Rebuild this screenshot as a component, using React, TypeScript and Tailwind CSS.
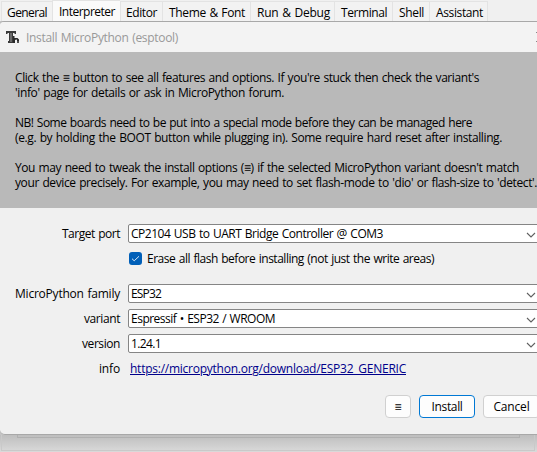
import { useLayoutEffect, useRef, useState } from "react";

/* Text whose tracking is tuned so the run is exactly `width` pixels wide. */
function Fit({ text, width, className = "" }: { text: string; width: number; className?: string }) {
  const ref = useRef<HTMLSpanElement>(null);
  const [spacing, setSpacing] = useState(0);
  useLayoutEffect(() => {
    const el = ref.current;
    if (!el) return;
    const natural = el.getBoundingClientRect().width - spacing * text.length;
    setSpacing((width - natural) / text.length);
  }, [text, width]);
  return (
    <span
      ref={ref}
      className={`inline-block [word-spacing:0.8px] whitespace-pre ${className}`}
      style={{ letterSpacing: spacing }}
    >
      {text}
    </span>
  );
}

const tabs = [
  { label: "General", text: 40, box: "w-[51px] pl-[5px]" },
  { label: "Interpreter", text: 56, box: "w-[68px] pl-[6px]", active: true },
  { label: "Editor", text: 31, box: "w-[42px] pl-[5px]" },
  { label: "Theme & Font", text: 76, box: "w-[88px] pl-[6px]" },
  { label: "Run & Debug", text: 73, box: "w-[84px] pl-[6px]" },
  { label: "Terminal", text: 46, box: "w-[58px] pl-[6px]" },
  { label: "Shell", text: 25, box: "w-[37px] pl-[6px]" },
  { label: "Assistant", text: 47, box: "w-[59px] pl-[6px]" },
];

const notes: [string, number][][] = [
  [
    ["Click the ≡ button to see all features and options. If you're stuck then check the variant's", 464],
    ["'info' page for details or ask in MicroPython forum.", 269],
  ],
  [
    ["NB! Some boards need to be put into a special mode before they can be managed here", 457],
    ["(e.g. by holding the BOOT button while plugging in). Some require hard reset after installing.", 487],
  ],
  [
    ["You may need to tweak the install options (≡) if the selected MicroPython variant doesn't match", 504],
    ["your device precisely. For example, you may need to set flash-mode to 'dio' or flash-size to 'detect'.", 522],
  ],
];

function Row({ label, width, children }: { label: string; width: number; children: React.ReactNode }) {
  return (
    <div className="flex h-[19px] items-center">
      <div className="flex w-[120px] shrink-0 justify-end">
        <Fit text={label} width={width} />
      </div>
      <div className="ml-2 min-w-0 flex-1">{children}</div>
    </div>
  );
}

function Combo({ text, width }: { text: string; width: number }) {
  return (
    <div className="flex h-[19px] w-[412px] items-center justify-between rounded-[2px] border border-[#858585] bg-white pr-[3px] pl-[2px]">
      <Fit text={text} width={width} />
      <svg className="mt-[2px] h-[6px] w-[10px] shrink-0" viewBox="0 0 10 6" fill="none" stroke="#606060" strokeWidth="1.1">
        <path d="M1 1l4 4 4-4" />
      </svg>
    </div>
  );
}

export default function App() {
  return (
    <div className="flex h-[452px] w-[537px] flex-col overflow-hidden bg-[#f0f0f0] font-['Open_Sans','Noto_Sans',sans-serif] text-[12px] leading-[15px] text-black">
      <div className="flex h-[21px] shrink-0 items-end pl-px">
        {tabs.map((t) => (
          <div
            key={t.label}
            className={`${t.box} shrink-0 border-t border-l border-[#e3e3e3] pt-[3px] ${
              t.active ? "h-[21px] bg-[#fafafa]" : "h-5 bg-[#f2f2f2]"
            } ${t.label === "Assistant" ? "border-r" : ""}`}
          >
            <Fit text={t.label} width={t.text} />
          </div>
        ))}
      </div>

      <div className="bg-[#c4c4c4]">
        <div className="flex h-[414px] shrink-0 flex-col rounded-tl-[4px] rounded-bl-[5px] border-t border-b border-[#a8a8a8] bg-[#f0f0f0]">
          <div className="flex h-[30px] shrink-0 items-center rounded-tl-[4px] bg-[#f3f3f3] pl-[6px] text-[#999]">
            <svg className="h-[14px] w-[14px] shrink-0" viewBox="0 0 14 14" fill="none">
              <path d="M0 1h10v3H8.5V3H7v8h1v2H2v-2h1V3H1.5v1H0z" fill="#3a3a3a" />
              <path d="M5 3v9" stroke="#b5b5b5" strokeWidth="0.8" />
              <path d="M7 6h1.5v2h3L13 9.5V13h-2v-3H9v3H7z" fill="#2a2a2a" />
              <path d="M9.5 9.5h1.5M12 11v2" stroke="#999" strokeWidth="0.7" />
            </svg>
            <Fit text="Install MicroPython (esptool)" width={152} className="ml-[6px]" />
            <svg className="ml-auto h-[10px] w-[1px]" viewBox="0 0 1 10" fill="none" stroke="#888">
              <path d="M0 .5h1M0 9.5h1" />
            </svg>
          </div>

          <div className="flex h-[156px] shrink-0 flex-col gap-[15px] bg-[#b9b9b9] pt-[18px] pl-[15px]">
            {notes.map((group, i) => (
              <div key={i}>
                {group.map(([line, width]) => (
                  <div key={line} className="h-[15px]">
                    <Fit text={line} width={width} />
                  </div>
                ))}
              </div>
            ))}
          </div>

          <div className="flex flex-col pt-4">
            <Row label="Target port" width={58}>
              <Combo text="CP2104 USB to UART Bridge Controller @ COM3" width={252} />
            </Row>
            <div className="mt-[5px] flex h-5 items-center pl-[129px]">
              <div className="flex size-[13px] items-center justify-center rounded-[3px] bg-[#005fb8]">
                <svg className="size-[9px]" viewBox="0 0 9 9" fill="none" stroke="#d8e8f6" strokeWidth="1">
                  <path d="M1 4.7l2.2 2.1L8 2.3" />
                </svg>
              </div>
              <Fit text="Erase all flash before installing (not just the write areas)" width={287} className="ml-[5px]" />
            </div>
            <div className="mt-4 flex flex-col gap-[6px]">
              <Row label="MicroPython family" width={105}>
                <Combo text="ESP32" width={30} />
              </Row>
              <Row label="variant" width={36}>
                <Combo text="Espressif • ESP32 / WROOM" width={144} />
              </Row>
              <Row label="version" width={38}>
                <Combo text="1.24.1" width={30} />
              </Row>
              <Row label="info" width={21}>
                <div className="flex pl-[2px]">
                  <Fit
                    text="https://micropython.org/download/ESP32_GENERIC"
                    width={276}
                    className="text-[#00008b] underline decoration-1 underline-offset-1"
                  />
                </div>
              </Row>
            </div>
          </div>

          <div className="mt-[17px] flex h-[23px] gap-2 pl-[385px]">
            <button className="flex w-[26px] shrink-0 items-center justify-center rounded-[4px] border border-[#d0d0d0] bg-[#fdfdfd]">
              <Fit text="≡" width={7} />
            </button>
            <button className="flex w-[56px] shrink-0 items-center justify-center rounded-[4px] border border-[#0078d4] bg-[#fdfdfd]">
              <Fit text="Install" width={31} />
            </button>
            <button className="flex w-[57px] shrink-0 items-center justify-center rounded-[4px] border border-[#d0d0d0] bg-[#fdfdfd]">
              <Fit text="Cancel" width={36} />
            </button>
          </div>
        </div>
      </div>

      <div className="h-[17px] shrink-0 bg-[linear-gradient(#bebebe,#dadada)] pr-[2px] pl-px">
        <div className="h-4 border-r border-b border-l border-[#c9c9c9] pr-[14px] pl-[15px]">
          <div className="h-[3px] border-r border-b border-l border-[#b0b0b0]" />
        </div>
      </div>
    </div>
  );
}
